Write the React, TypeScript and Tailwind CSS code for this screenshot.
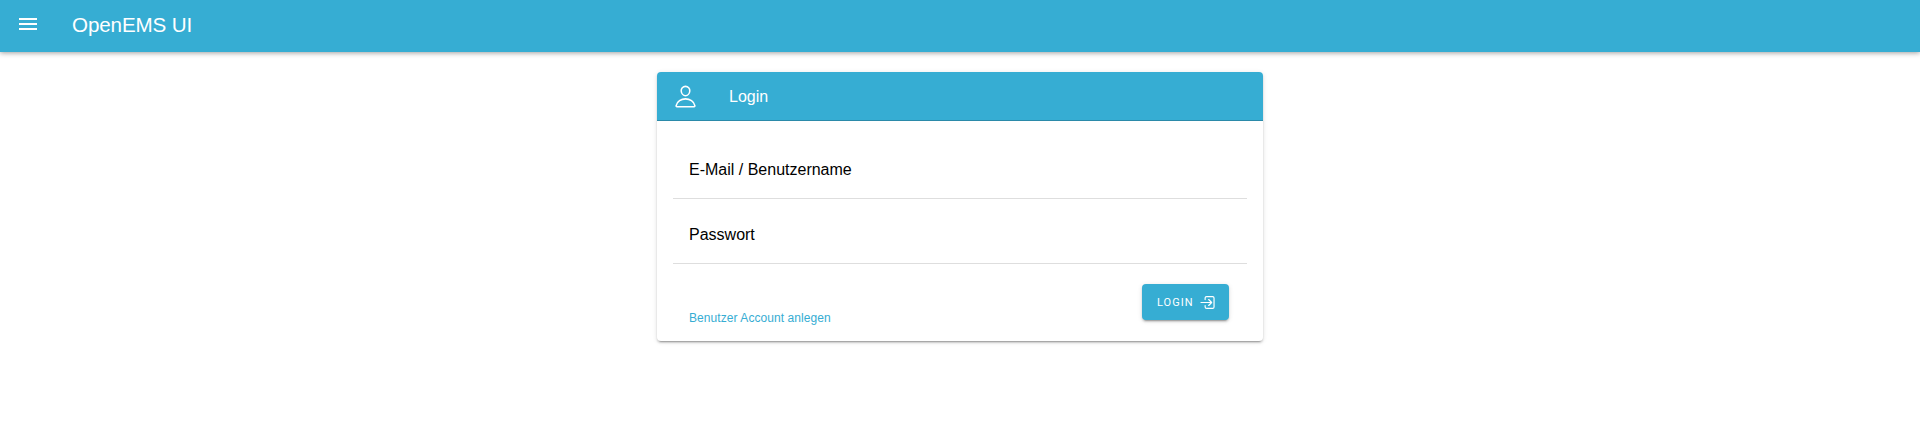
import React from "react";

function PersonIcon() {
  return (
    <svg viewBox="0 0 512 512" className="size-[25px] shrink-0" fill="none" stroke="currentColor" strokeWidth="32">
      <path strokeLinecap="round" strokeLinejoin="round" d="M344 144c-3.92 52.87-44 96-88 96s-84.15-43.12-88-96c-4-55 35-96 88-96s92 42 88 96z" />
      <path strokeMiterlimit="10" d="M256 304c-87 0-175.3 48-191.64 138.6C62.39 453.52 68.57 464 80 464h352c11.44 0 17.62-10.48 15.65-21.4C431.3 352 343 304 256 304z" />
    </svg>
  );
}

function LogInIcon() {
  return (
    <svg viewBox="0 0 512 512" className="size-[19px] shrink-0" fill="none" stroke="currentColor" strokeWidth="32" strokeLinecap="round" strokeLinejoin="round">
      <path d="M192 176v-40a40 40 0 0 1 40-40h160a40 40 0 0 1 40 40v240a40 40 0 0 1-40 40H240c-22.09 0-48-17.91-48-40v-40" />
      <path d="M288 336l80-80-80-80M80 256h272" />
    </svg>
  );
}

export default function App() {
  return (
    <div className="flex h-[435px] flex-col items-center bg-white font-['Liberation_Sans',Arial,sans-serif] text-black">
      <header className="flex h-[52px] w-full shrink-0 items-start bg-[#36add3] px-4 text-white shadow-[0_1px_5px_rgba(0,0,0,0.38)]">
        <button aria-label="Menu" className="mt-3">
          <svg viewBox="0 0 24 24" className="size-6" fill="currentColor">
            <path d="M3 18h18v-2H3v2zm0-5h18v-2H3v2zm0-7v2h18V6H3z" />
          </svg>
        </button>
        <h1 className="ml-8 mt-[11px] text-[20.6px] leading-7 tracking-[-0.12px]">OpenEMS UI</h1>
      </header>

      <main className="mt-5 flex h-[269px] w-[606px] shrink-0 flex-col overflow-hidden rounded shadow-[0_3px_1px_-2px_rgba(0,0,0,0.2),0_2px_2px_0_rgba(0,0,0,0.14),0_1px_5px_0_rgba(0,0,0,0.12)]">
        <div className="flex h-[49px] shrink-0 items-center gap-[31px] border-b border-[#2b8aa9] bg-[#36add3] pl-4 text-white">
          <PersonIcon />
          <h2 className="pt-0.5 text-base">Login</h2>
        </div>
        <form className="flex flex-1 flex-col px-4 pt-[13px]">
          <label className="flex h-[65px] items-center border-b border-[#dedede] pl-4 pt-[7px] text-base">E-Mail / Benutzername</label>
          <label className="flex h-[65px] items-center border-b border-[#dedede] pl-4 pt-[7px] text-base">Passwort</label>
          <div className="flex items-start justify-between pl-4 pr-[18px] pt-5">
            <a className="mt-[26px] text-xs tracking-[0.07px] text-[#36add3]">Benutzer Account anlegen</a>
            <button type="button" className="flex h-9 w-[87px] items-center gap-[5px] rounded bg-[#36add3] pl-[15px] font-['Roboto',sans-serif] text-[11px] tracking-[1px] text-white shadow-[0_3px_1px_-2px_rgba(0,0,0,0.2),0_2px_2px_0_rgba(0,0,0,0.14),0_1px_5px_0_rgba(0,0,0,0.12)]">
              <span className="pt-0.5">LOGIN</span>
              <LogInIcon />
            </button>
          </div>
        </form>
      </main>
    </div>
  );
}
